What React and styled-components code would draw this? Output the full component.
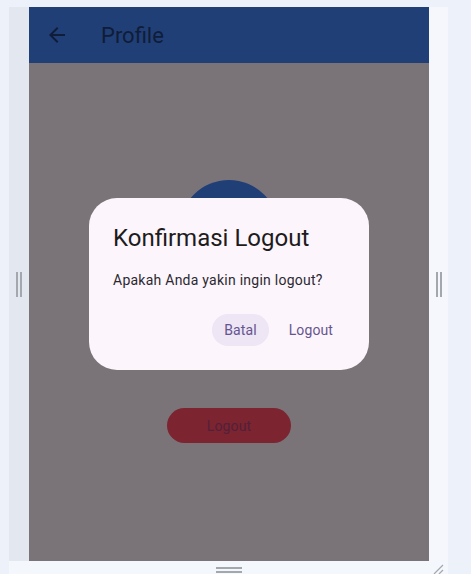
import React from 'react';
import styled, { createGlobalStyle } from 'styled-components';

const GlobalStyle = createGlobalStyle`
  html, body { margin: 0; padding: 0; }
  body {
    background: #edf1f9;
    font-family: Roboto, "Noto Sans", sans-serif;
    width: 471px;
    height: 574px;
    overflow: hidden;
  }
`;

const Page = styled.div`
  padding: 7px 0 0 9px;
`;

const Frame = styled.div`
  display: grid;
  grid-template-columns: 20px 400px 19px;
  grid-template-rows: 554px 13px;
  width: 439px;
`;

const SideStrip = styled.div`
  background: ${(p) => (p.$left ? '#e3e7ef' : '#f5f7fc')};
  display: flex;
  align-items: center;
  padding-left: 7px;
  box-sizing: border-box;
`;

const Grip = styled.div`
  display: flex;
  flex-direction: ${(p) => (p.$row ? 'column' : 'row')};
  gap: 2px;
  & > span {
    display: block;
    background: #a3a7ae;
    width: ${(p) => (p.$row ? '26px' : '2px')};
    height: ${(p) => (p.$row ? '2px' : '25px')};
  }
`;

const BottomStrip = styled.div`
  grid-column: 1 / 4;
  background: #f4f7fc;
  display: flex;
  align-items: flex-end;
  position: relative;
  padding-left: 207px;
  padding-bottom: 1px;
  box-sizing: border-box;
`;

const Corner = styled.svg`
  position: absolute;
  right: 4px;
  bottom: 0;
`;

const Screen = styled.div`
  position: relative;
  display: flex;
  flex-direction: column;
  background: #7a7478;
  overflow: hidden;
`;

const AppBar = styled.div`
  height: 56px;
  background: #213f77;
  display: flex;
  align-items: center;
  padding-left: 16px;
  gap: 32px;
  color: #0f1d38;
  font-size: 22px;
  flex-shrink: 0;
`;

const Body = styled.div`
  flex: 1;
  display: flex;
  flex-direction: column;
  align-items: center;
  padding-top: 117px;
`;

const Avatar = styled.div`
  width: 100px;
  height: 100px;
  border-radius: 50%;
  background: #213f77;
`;

const RedButton = styled.div`
  margin-top: 128px;
  width: 124px;
  height: 35px;
  border-radius: 18px;
  background: #7c2430;
  color: #52203a;
  font-size: 14px;
  display: flex;
  align-items: center;
  justify-content: center;
  letter-spacing: 0.1px;
`;

const Dialog = styled.div`
  position: absolute;
  left: 60px;
  top: 191px;
  width: 280px;
  box-sizing: border-box;
  padding: 24px;
  border-radius: 28px;
  background: #fdf5fc;
  display: flex;
  flex-direction: column;
`;

const Title = styled.div`
  font-size: 24px;
  line-height: 32px;
  color: #1d1b20;
`;

const Message = styled.div`
  margin-top: 16px;
  font-size: 14px;
  line-height: 20px;
  color: #2b2930;
  letter-spacing: 0.25px;
`;

const Actions = styled.div`
  margin-top: 24px;
  display: flex;
  justify-content: flex-end;
  gap: 8px;
`;

const TextButton = styled.div`
  height: 32px;
  padding: 0 12px;
  border-radius: 16px;
  background: ${(p) => (p.$hover ? '#eee5f5' : 'transparent')};
  color: #65558f;
  font-size: 14px;
  letter-spacing: 0.1px;
  display: flex;
  align-items: center;
`;

const BackIcon = () => (
  <svg width="24" height="24" viewBox="0 0 24 24">
    <path d="M20 11H7.83l5.59-5.59L12 4l-8 8 8 8 1.41-1.41L7.83 13H20v-2z" fill="#0f1d38" />
  </svg>
);

export default function App() {
  return (
    <>
      <GlobalStyle />
      <Page>
        <Frame>
          <SideStrip $left>
            <Grip>
              <span />
              <span />
            </Grip>
          </SideStrip>
          <Screen>
            <AppBar>
              <BackIcon />
              <span>Profile</span>
            </AppBar>
            <Body>
              <Avatar />
              <RedButton>Logout</RedButton>
            </Body>
            <Dialog>
              <Title>Konfirmasi Logout</Title>
              <Message>Apakah Anda yakin ingin logout?</Message>
              <Actions>
                <TextButton $hover>Batal</TextButton>
                <TextButton>Logout</TextButton>
              </Actions>
            </Dialog>
          </Screen>
          <SideStrip>
            <Grip>
              <span />
              <span />
            </Grip>
          </SideStrip>
          <BottomStrip>
            <Grip $row>
              <span />
              <span />
            </Grip>
            <Corner width="12" height="10" viewBox="0 0 12 10">
              <path d="M2 10 L11 1 M7 10 L11 6" stroke="#a3a7ae" strokeWidth="1.2" />
            </Corner>
          </BottomStrip>
        </Frame>
      </Page>
    </>
  );
}
